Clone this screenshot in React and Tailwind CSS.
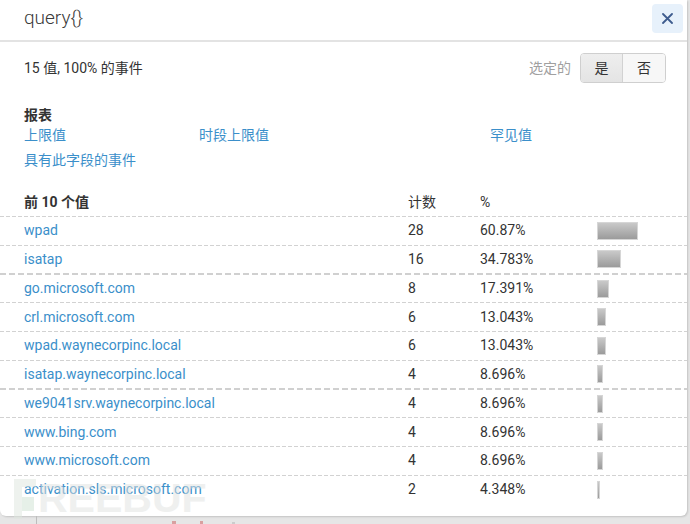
import React from "react";

const rows = [
  { name: "wpad", count: 28, pct: "60.87%", v: 60.87, thick: false },
  { name: "isatap", count: 16, pct: "34.783%", v: 34.783, thick: true },
  { name: "go.microsoft.com", count: 8, pct: "17.391%", v: 17.391, thick: false },
  { name: "crl.microsoft.com", count: 6, pct: "13.043%", v: 13.043, thick: false },
  { name: "wpad.waynecorpinc.local", count: 6, pct: "13.043%", v: 13.043, thick: false },
  { name: "isatap.waynecorpinc.local", count: 4, pct: "8.696%", v: 8.696, thick: true },
  { name: "we9041srv.waynecorpinc.local", count: 4, pct: "8.696%", v: 8.696, thick: false },
  { name: "www.bing.com", count: 4, pct: "8.696%", v: 8.696, thick: false },
  { name: "www.microsoft.com", count: 4, pct: "8.696%", v: 8.696, thick: false },
  { name: "activation.sls.microsoft.com", count: 2, pct: "4.348%", v: 4.348, thick: false, last: true },
];

function ThinLine() {
  return (
    <div className="h-px w-full bg-[repeating-linear-gradient(to_right,#d2d2d2_0_4px,transparent_4px_6px)]" />
  );
}
function ThickLine() {
  return (
    <div className="h-[2px] w-full bg-[repeating-linear-gradient(to_right,#d0d0d0_0_6px,transparent_6px_9px)]" />
  );
}

export default function App() {
  return (
    <div
      className="relative w-[690px] h-[524px] overflow-hidden bg-[#e6e6e6] text-[#333]"
      style={{ fontFamily: "Roboto, 'Noto Sans CJK SC', sans-serif" }}
    >
      {/* modal */}
      <div className="w-[687px] h-[516px] bg-white rounded-b-[6px] shadow-[1px_1px_2px_rgba(0,0,0,0.15)] flex flex-col">
        {/* header */}
        <div className="h-[40px] flex items-center justify-between pl-[24px] pr-[4px] border-b-2 border-[#e3e3e3] box-content">
          <div className="text-[19px] font-light text-[#3a3a3a] leading-none -mt-[5px]">query{"{}"}</div>
          <button className="w-[31px] h-[29px] rounded-[4px] bg-[#e7f1fb] flex items-center justify-center -mt-[4px]">
            <svg width="11" height="11" viewBox="0 0 11 11">
              <path d="M1 1 L10 10 M10 1 L1 10" stroke="#3e5c8e" strokeWidth="1.8" strokeLinecap="round" />
            </svg>
          </button>
        </div>

        {/* summary */}
        <div className="pt-[11px] pl-[24px] pr-[21px] flex items-center justify-between h-[30px] box-content">
          <div className="text-[14px] mt-[1px]">15 值, 100% 的事件</div>
          <div className="flex items-center">
            <span className="text-[14px] text-[#a0a0a0] mr-[9px]">选定的</span>
            <div className="flex h-[30px] rounded-[4px] border border-[#cfcfcf] overflow-hidden text-[14px] text-[#333]">
              <div className="w-[42px] flex items-center justify-center bg-[linear-gradient(#eeeeee,#e4e4e4)] border-r border-[#d2d2d2]">是</div>
              <div className="w-[42px] flex items-center justify-center bg-[#f7f7f7]">否</div>
            </div>
          </div>
        </div>

        {/* reports */}
        <div className="mt-[22px] pl-[24px] text-[14px] leading-[20px]">
          <div className="font-bold text-[#333]">报表</div>
          <div className="flex text-[#3b8fca]">
            <div className="w-[175px]">上限值</div>
            <div className="w-[291px]">时段上限值</div>
            <div>罕见值</div>
          </div>
          <div className="mt-[5px] text-[#3b8fca]">具有此字段的事件</div>
        </div>

        {/* table */}
        <div className="mt-[22px] text-[14px]">
          <div className="flex h-[20px] leading-[20px] pl-[24px] mb-[4px]">
            <div className="w-[384px] font-bold">前 10 个值</div>
            <div className="w-[72px]">计数</div>
            <div className="w-[117px]">%</div>
          </div>
          <ThinLine />
          {rows.map((r) => (
            <div key={r.name}>
              <div className={`flex items-center pl-[24px] ${r.thick ? "h-[27px]" : "h-[27.7px]"}`}>
                <div className="w-[384px] text-[#3b8fca]">{r.name}</div>
                <div className="w-[72px]">{r.count}</div>
                <div className="w-[117px]">{r.pct}</div>
                <div className="flex-1 flex items-center">
                  <div
                    className="h-[18px] border border-[#d6d6d6] bg-[linear-gradient(#c9c9c9,#9b9b9b)]"
                    style={{ width: `${Math.max(2, (r.v / 100) * 68)}px` }}
                  />
                </div>
              </div>
              {!r.last && (r.thick ? <ThickLine /> : <ThinLine />)}
            </div>
          ))}
        </div>
      </div>

      {/* background page fragments below the modal */}
      <div className="absolute left-[36px] top-[516px] w-px h-[8px] bg-[#bdbdbd]" />
      <div className="absolute left-[172px] top-[521px] w-[4px] h-[3px] bg-[#d9a0a0]" />
      <div className="absolute left-[200px] top-[521px] w-[3px] h-[3px] bg-[#d9a0a0]" />
      <div className="absolute left-[232px] top-[522px] w-[3px] h-[2px] bg-[#cccccc]" />

      {/* watermark */}
      <div className="pointer-events-none absolute left-[14px] top-[478px] flex items-end opacity-50">
        <div className="w-[24px] h-[40px] border-l-[8px] border-[#dfe7df] flex flex-col justify-start">
          <div className="w-[14px] h-[8px] bg-[#dfe7df]" />
          <div className="mt-[10px] w-[12px] h-[14px] bg-[#cfe3d2]" />
        </div>
        <div
          className="text-[41px] leading-none font-black text-[#e0e2e0] tracking-[0px]"
          style={{ fontFamily: "'Liberation Sans', sans-serif" }}
        >
          REEBUF
        </div>
      </div>
    </div>
  );
}
